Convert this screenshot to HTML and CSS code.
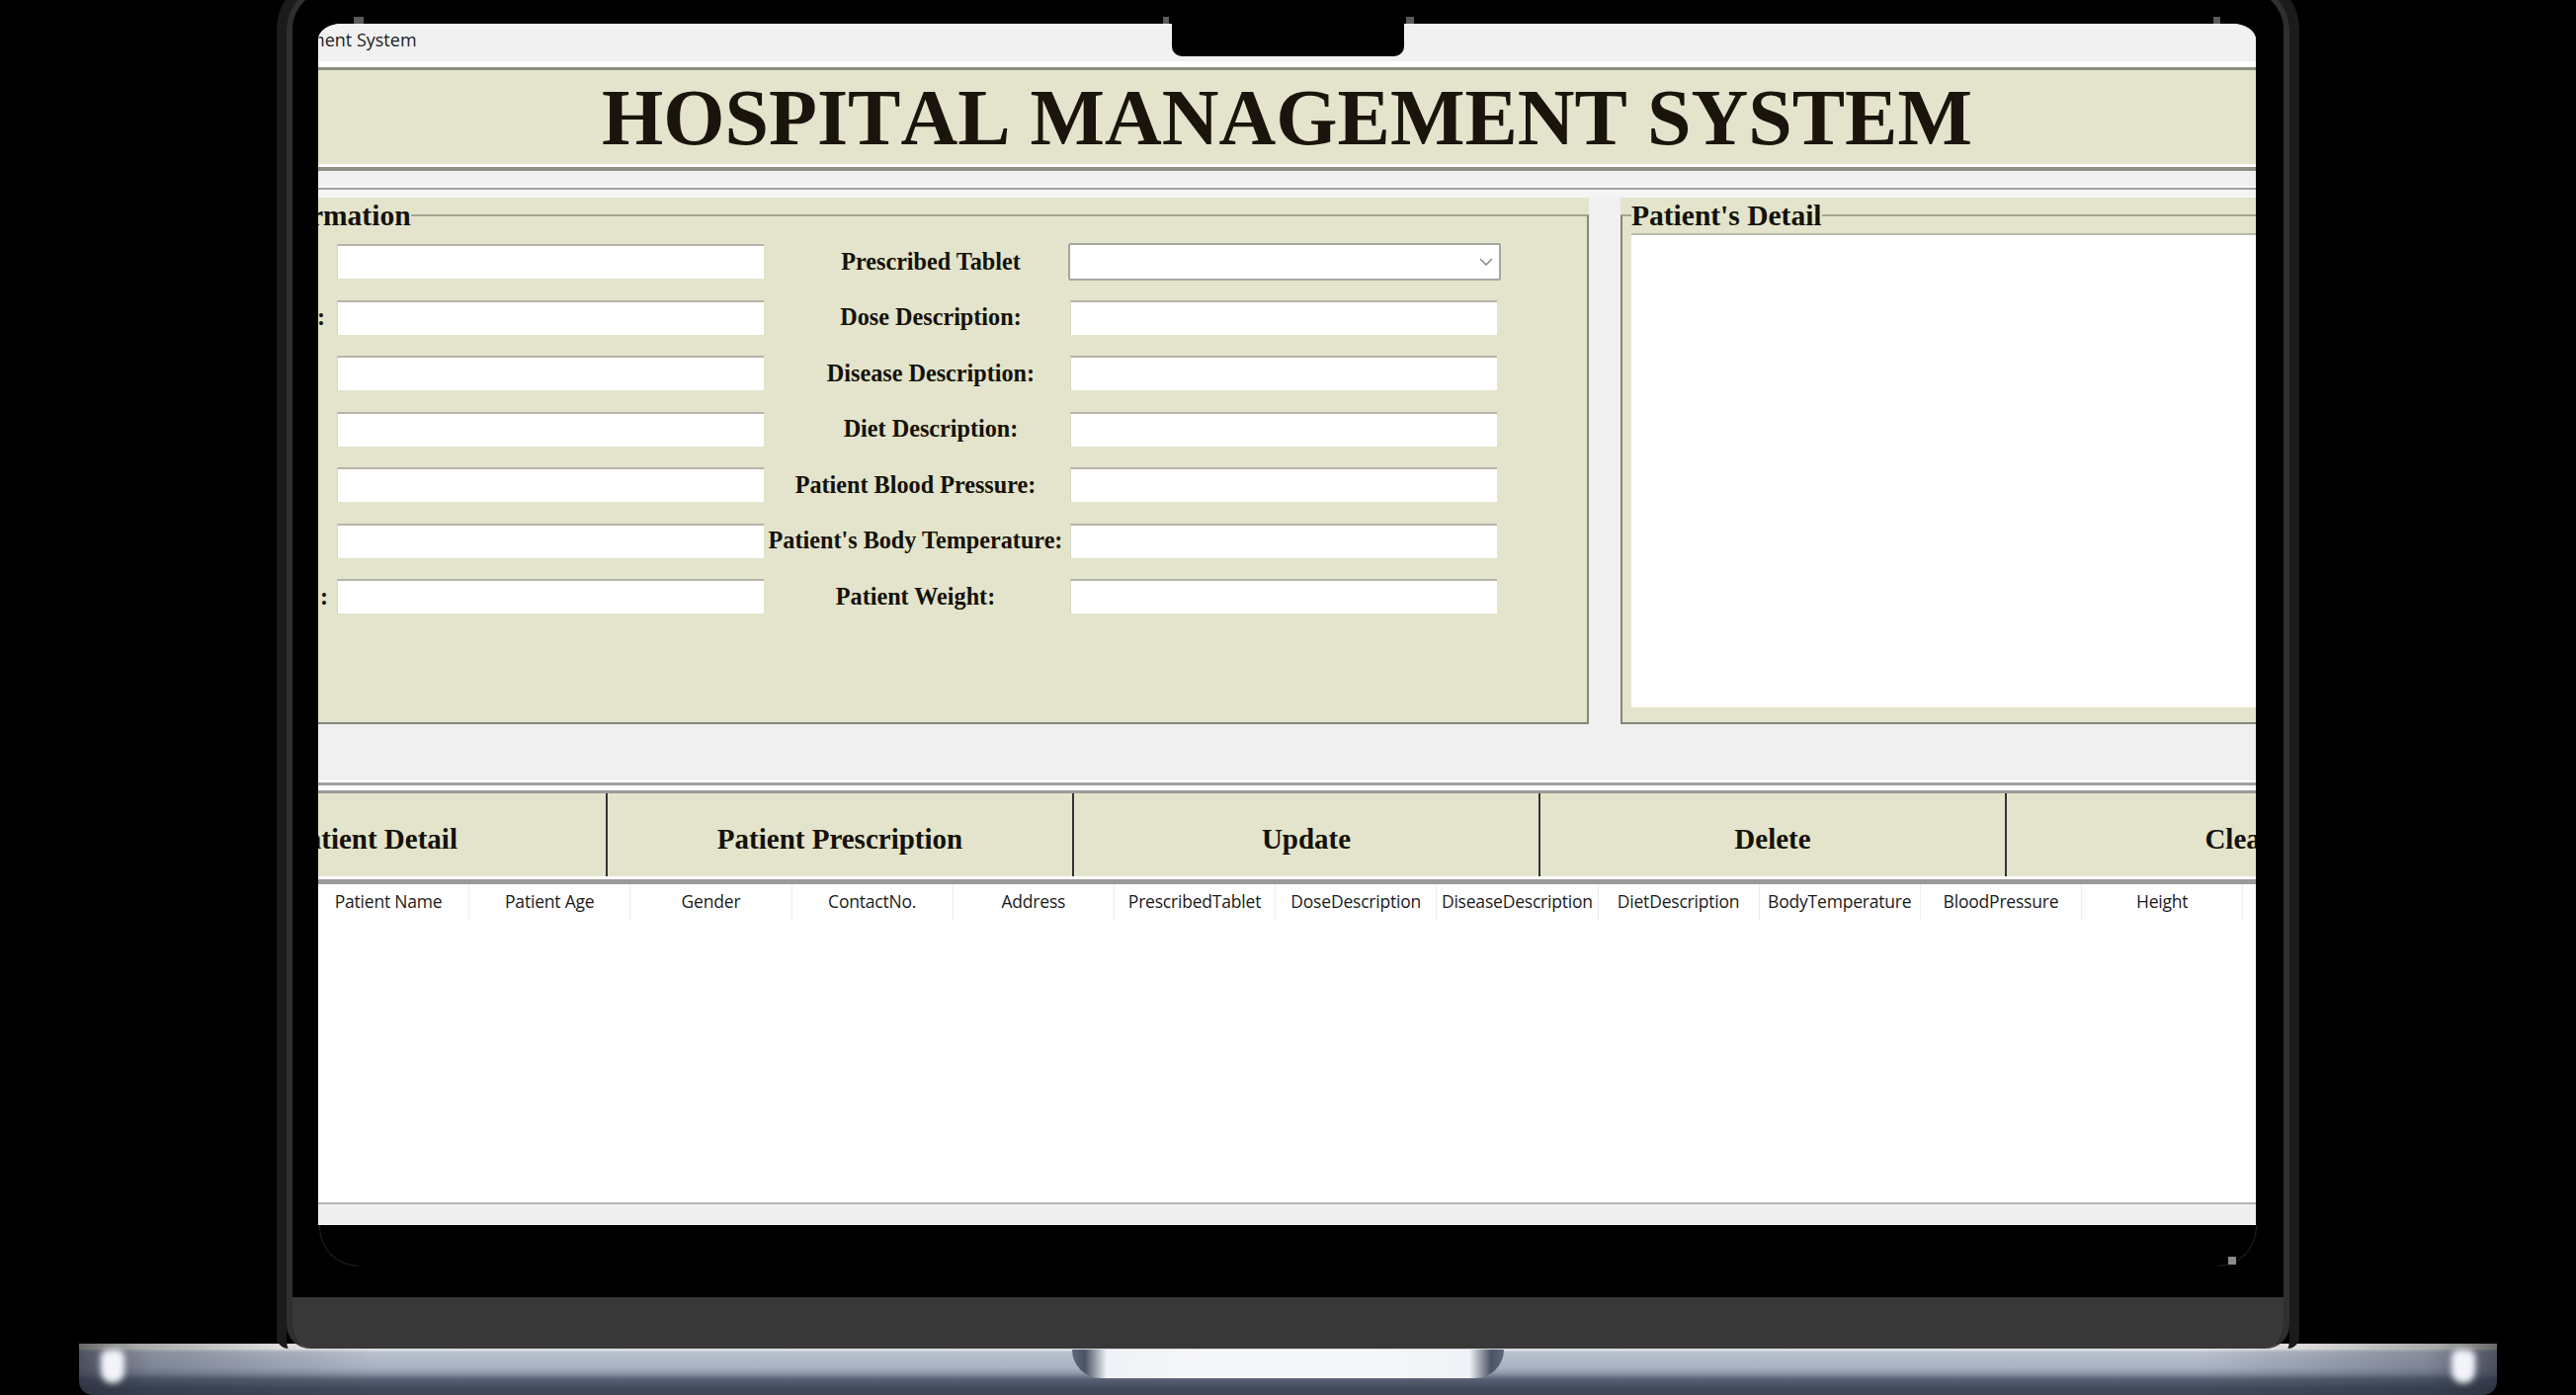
FILE: index.html
```html
<!DOCTYPE html>
<html>
<head>
	<title>Hospital Management System</title>
	<meta charset="UTF-8">
	<link rel="stylesheet" href="styles.css">
</head>
<body>
<div class="laptop">
	<div class="lid">
		<div class="lid-inner">
			<div class="display">
				<div class="notch"></div>
				<span class="speck speck-a"></span>
				<span class="speck speck-b"></span>
				<span class="speck speck-c"></span>
				<span class="speck speck-d"></span>
				<span class="speck speck-e"></span>
				<span class="arc arc-left"></span>
				<span class="arc arc-right"></span>
				<div class="screen">
					<div class="app">
						<div class="titlebar">Hospital Management System</div>
						<div class="banner"><h1>HOSPITAL MANAGEMENT SYSTEM</h1></div>
						<div class="rule"></div>
						<div class="panels">
							<div class="group group-info">
								<fieldset>
									<legend>Patient Information</legend>
									<div class="form">
										<label class="edge"></label><input type="text">
										<label class="mid mid-right">Prescribed Tablet</label>
										<div class="select"><svg width="14" height="8" viewBox="0 0 14 8"><path d="M1 1l6 6 6-6" fill="none" stroke="#8a8a8a" stroke-width="1.5"/></svg></div>

										<label class="edge">:</label><input type="text">
										<label class="mid mid-right">Dose Description:</label><input type="text">

										<label class="edge"></label><input type="text">
										<label class="mid mid-right">Disease Description:</label><input type="text">

										<label class="edge"></label><input type="text">
										<label class="mid mid-right">Diet Description:</label><input type="text">

										<label class="edge"></label><input type="text">
										<label class="mid">Patient Blood Pressure:</label><input type="text">

										<label class="edge"></label><input type="text">
										<label class="mid">Patient's Body Temperature:</label><input type="text">

										<label class="edge edge-short">:</label><input type="text">
										<label class="mid">Patient Weight:</label><input type="text">
									</div>
								</fieldset>
							</div>
							<div class="group group-detail">
								<fieldset>
									<legend>Patient's Detail</legend>
									<textarea></textarea>
								</fieldset>
							</div>
						</div>
						<div class="actions">
							<button>Patient Detail</button>
							<button>Patient Prescription</button>
							<button>Update</button>
							<button>Delete</button>
							<button>Clear</button>
						</div>
						<div class="records">
							<div class="records-head">
								<span>Patient Name</span>
								<span>Patient Age</span>
								<span>Gender</span>
								<span>ContactNo.</span>
								<span>Address</span>
								<span>PrescribedTablet</span>
								<span>DoseDescription</span>
								<span>DiseaseDescription</span>
								<span>DietDescription</span>
								<span>BodyTemperature</span>
								<span>BloodPressure</span>
								<span>Height</span>
								<span></span>
							</div>
						</div>
						<div class="statusbar"></div>
					</div>
				</div>
			</div>
			<div class="chin"></div>
		</div>
	</div>
	<div class="base">
		<span class="glow"></span>
		<div class="trough"></div>
		<span class="glow"></span>
	</div>
</div>
</body>
</html>
```

FILE: styles.css
```css
html,body{margin:0; padding:0; height:100%; background:#000; overflow:hidden;}
body{font-family:"Liberation Serif",serif;}

/* laptop shell */
.laptop{width:2607px; height:1412px; overflow:hidden;}
.lid{position:relative; z-index:2; box-sizing:border-box; width:2047px; height:1391px; margin:-26px 0 0 280px; border:10px solid #1b1b1b; border-bottom:0; border-radius:56px 56px 12px 12px;}
.lid-inner{display:flex; flex-direction:column; height:100%; box-sizing:border-box; border:6px solid #2f2f2f; border-bottom:0; border-radius:46px 46px 24px 24px; overflow:hidden;}
.display{position:relative; flex:1; padding:34px 26px 73px; background:#000;}
.chin{height:52px; background:#383838;}
.base{position:relative; z-index:1; display:flex; justify-content:space-between; align-items:flex-start; box-sizing:border-box; width:2447px; height:52px; margin:-5px 0 0 80px; padding:6px 22px 0; border-radius:0 0 14px 14px;
	background:
		linear-gradient(90deg,#6a6a6a,#a8a8a8 60px,#dcdcdc 200px,#dcdcdc 2247px,#a8a8a8 2387px,#6a6a6a) top/100% 6px no-repeat,
		linear-gradient(90deg,rgba(40,46,60,.75),rgba(40,46,60,.35) 70px,rgba(40,46,60,0) 300px,rgba(40,46,60,0) 2147px,rgba(40,46,60,.35) 2377px,rgba(40,46,60,.75)),
		linear-gradient(180deg,#dfe2e8 6px,#b9c0ce 9px,#a9b1c3 24px,#8f98ab 30px,#596275 36px,#3f4859 46px);}
.glow{width:24px; height:34px; border-radius:8px 8px 12px 12px; background:#f2f4fa; filter:blur(3px);}
.trough{width:437px; height:29px; border-radius:0 0 30px 30px; background:linear-gradient(90deg,#5f6779,#4a5264 3%,#eff2f7 8%,#f6f7fa 30%,#f6f7fa 70%,#eff2f7 92%,#4a5264 97%,#5f6779);}

/* over the display */
.notch{position:absolute; z-index:3; left:890px; top:34px; width:235px; height:33px; border-radius:0 0 10px 10px; background:#000;}
.speck{position:absolute; z-index:1; background:#5a5a5a;}
.speck-a{left:62px; top:27px; width:10px; height:7px;}
.speck-b{left:881px; top:27px; width:6px; height:7px;}
.speck-c{left:1127px; top:27px; width:8px; height:7px;}
.speck-d{left:1944px; top:27px; width:7px; height:7px;}
.speck-e{left:1959px; top:1282px; width:8px; height:8px; background:#8a8a8a;}
.arc{position:absolute; top:1250px; width:40px; height:42px; border-bottom:1px solid #222; box-sizing:border-box;}
.arc-left{left:27px; border-left:1px solid #222; border-radius:0 0 0 40px;}
.arc-right{left:1948px; border-right:1px solid #222; border-radius:0 0 40px 0;}

/* the application window, wider than the screen it is shown on */
.screen{width:1961px; height:1216px; overflow:hidden; border-radius:24px 24px 0 0 / 16px 16px 0 0; background:#f0f0f0;}
.app{width:2321px; margin-left:-180px;}
.titlebar{box-sizing:border-box; height:38px; padding-left:29px; font:18px/32px "Open Sans",sans-serif; color:#222; background:#f1f1f1;}

.banner{border-top:6px solid #fff; border-bottom:3px solid #fff;}
.banner h1{box-sizing:content-box; height:95px; margin:0; border-top:3px solid #8b8d80; text-align:center; font-size:80px; line-height:96px; font-weight:bold; font-kerning:none; color:#1a140c; background:#e3e4cb;}
.rule{box-sizing:border-box; height:31px; border-top:4px solid #8f9085; border-bottom:8px solid #f4f4f4; background:linear-gradient(180deg,#f0f0f0 15px,#fff 15px,#fff 17px,#a0a0a0 17px);}

.panels{display:flex; gap:32px; height:533px;}
.group{box-sizing:border-box; padding-top:3px; background:#e3e4cb;}
.group-info{width:1466px;}
.group-detail{flex:1;}
fieldset{box-sizing:border-box; height:100%; margin:0; padding:0; min-width:0; border:0 solid #85867a;}
legend{padding:0; font-size:29.5px; line-height:30px; font-weight:bold; color:#15110a;}
.group-info fieldset{border-width:2px 2px 2px 0; border-top-color:#a3a594; padding:14px 0 0;}
.group-info legend{margin-left:22px;}
.group-detail fieldset{border-width:2px 0 2px 2px; border-top-color:#a3a594; padding:3px 0 0 9px;}
.group-detail legend{margin-left:0;}

.form{display:grid; grid-template-columns:199px 432px 310px 432px; grid-auto-rows:35px; row-gap:21.5px; align-items:center;}
.form input,.select{box-sizing:border-box; height:35px; margin:0; padding:0; border:0; border-top:2px solid #b4b4a8; border-left:1px solid #d5d5c8; border-radius:0; background:#fff;}
.select{display:flex; align-items:center; justify-content:flex-end; width:438px; height:38px; margin-left:-2px; padding-right:6px; border:2px solid #a6a6a0; border-radius:2px;}
label{font-size:24.2px; line-height:30px; font-weight:bold; white-space:nowrap; color:#15110a;}
.edge{text-align:right; padding-right:12px;}
.edge-short{padding-right:9px;}
.mid{text-align:center; padding-right:3px;}
.mid-right{padding-left:28px; padding-right:0;}

textarea{display:block; box-sizing:border-box; width:100%; height:480px; margin:0; padding:0; border:0; border-top:2px solid #b9baa8; border-radius:0; outline:0; resize:none; background:#fff;}

/* the two lines and the white gap above the buttons, the lines below them */
.actions{display:flex; box-sizing:border-box; height:105px; margin-top:57px; padding:13px 0 8px 1px; background:linear-gradient(180deg,#fff 2px,#a0a0a0 2px,#a0a0a0 5px,#fff 5px,#fff 10px,#9a9a9a 10px,#9a9a9a 13px,#e3e4cb 13px,#e3e4cb 97px,#fff 97px,#fff 100px,#9a9a9a 100px);}
.actions button{flex:0 0 472px; box-sizing:border-box; height:84px; margin:0; padding:8px 0 0; border:0; border-right:2px solid #333; font:bold 29px "Liberation Serif",serif; color:#15110a; background:#e3e4cb;}

.records{height:322px; background:#fff; border-bottom:2px solid #b5b5b5;}
.records-head{display:flex; margin-left:170px;}
.records-head span{flex:0 0 163.2px; box-sizing:border-box; height:37px; border-right:1px solid #ededed; text-align:center; font:17.5px/34px "Open Sans",sans-serif; color:#1a1a1a; letter-spacing:-.2px;}
.statusbar{height:21px; background:#efefef;}
```
